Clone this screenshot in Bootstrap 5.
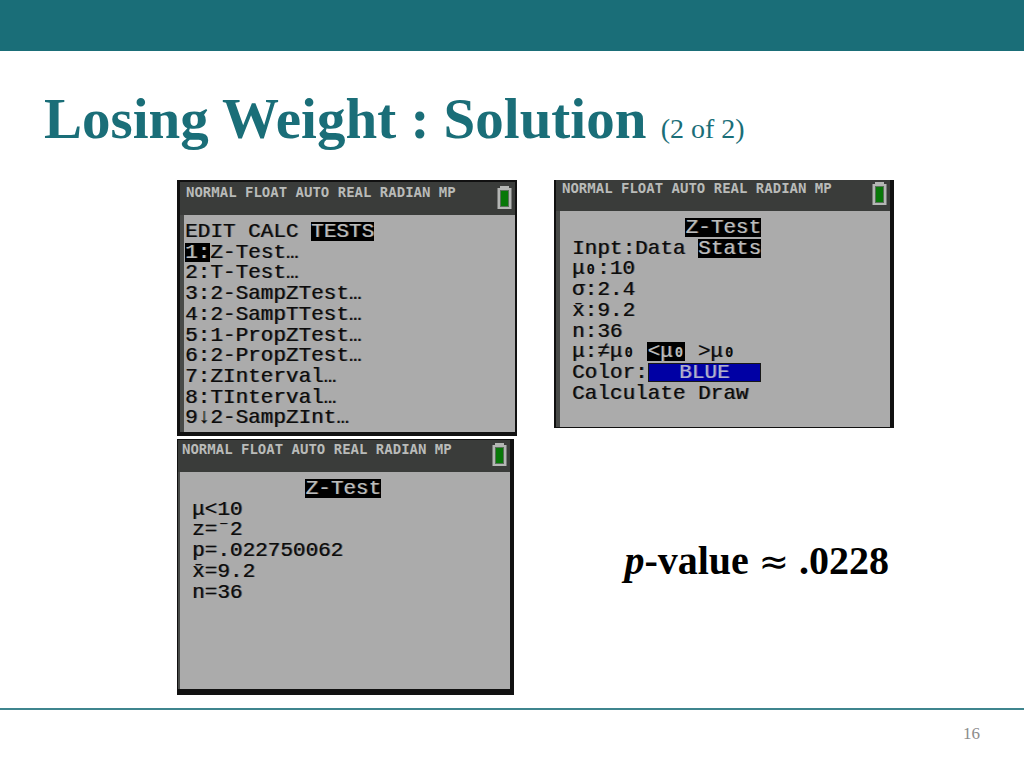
<!DOCTYPE html>
<html lang="en">
<head>
<meta charset="utf-8">
<meta name="viewport" content="width=device-width, initial-scale=1">
<title>Losing Weight : Solution</title>
<link href="https://cdn.jsdelivr.net/npm/bootstrap@5.3.0/dist/css/bootstrap.min.css" rel="stylesheet">
<style>
  :root { --teal: #1a6e78; --lcd: #ababab; --ink: #0c0c0c; --bar: #3a3c3a; }
  body { font-family: "Liberation Serif", "Times New Roman", serif; color: #000; background: #fff; }
  .top-band { height: 51px; background: var(--teal); }
  .slide-title { color: var(--teal); font-size: 57px; line-height: 68px; font-weight: 700; padding: 34px 44px 27px; }
  .slide-title .part { font-size: 28px; font-weight: 400; line-height: 28px; }
  .boards { display: grid; grid-template-columns: 1fr 1fr; gap: 3px 37px; padding: 0 130px 0 177px; }

  /* calculator screens */
  .calc { background: var(--lcd); border: 0 solid #111; font-family: "Liberation Mono", "DejaVu Sans Mono", monospace; color: var(--ink); }
  .calc-menu { aspect-ratio: 340 / 256; border-width: 2px 2px 4px 3px; }
  .calc-setup { aspect-ratio: 340 / 248; border-width: 0 4px 1px 2px; }
  .calc-result { aspect-ratio: 337 / 256; border-width: 1px 4px 6px 1px; margin-right: 3px; }
  .status { background: var(--bar); color: #b9bbb9; font-family: "DejaVu Sans Mono", monospace; font-size: 14px; line-height: 16px; font-weight: 700; white-space: pre; }
  .calc-menu .status { height: 33px; padding: 2px 3px 0 6px; }
  .calc-setup .status { height: 31px; padding: 0 3px 0 6px; }
  .calc-result .status { height: 32px; padding: 1px 3px 0 4px; }
  .battery { width: 15px; height: 23px; margin-top: 2px; }
  .lcd { display: grid; grid-template-rows: repeat(10, minmax(0, 1fr)); border-left: 4px solid #484a48; padding: 7px 0 3px 1px; font-size: 21px; line-height: 19px; white-space: pre; text-shadow: 1px 0 rgb(12 12 12 / 50%); }
  .calc-setup .lcd { padding: 7px 0 2px 12px; }
  .calc-result .lcd { padding: 7px 0 3px 12px; border-left-width: 2px; }
  .inv { display: inline-block; background: #000; color: #bcbcbc; text-shadow: 1px 0 rgb(188 188 188 / 50%); }
  .blue { display: inline-block; background: #0000a4; color: #b0b0cc; width: 9ch; text-align: center; outline: 1px solid #181818; outline-offset: -1px; text-shadow: 1px 0 rgb(176 176 204 / 50%); }
  .nought { font-family: "DejaVu Sans Mono", monospace; font-size: 14px; line-height: 14px; font-weight: 700; padding: 0 2px; text-shadow: none; }

  .answer { font-size: 40px; line-height: 48px; font-weight: 700; padding: 0 5px 12px 0; }
  .approx { font-family: "DejaVu Sans", sans-serif; font-size: 36px; line-height: 36px; font-weight: 400; }
  .foot { border-top: 2px solid #3f858e; color: #8c8c8c; font-size: 17px; line-height: 20px; padding: 14px 44px 0; height: 60px; }
</style>
</head>
<body>
<svg class="d-none" aria-hidden="true">
  <symbol id="battery" viewBox="0 0 15 23">
    <path d="M3 0h9v2h2.500v21H.5V2H3z" fill="#b4b6b4"/>
    <path d="M3 4h9v17H3z" fill="#59705a"/>
    <path d="M4 5h7v15H4z" fill="#087808"/>
  </symbol>
</svg>
<div class="d-flex flex-column min-vh-100">
  <header class="top-band"></header>
  <main class="flex-grow-1">
    <h1 class="slide-title m-0">Losing Weight : Solution <span class="part">(2 of 2)</span></h1>
    <div class="boards align-items-start">
      <section class="calc calc-menu d-flex flex-column">
        <div class="status d-flex justify-content-between"><span>NORMAL FLOAT AUTO REAL RADIAN MP</span><svg class="battery"><use href="#battery"/></svg></div>
        <div class="lcd flex-grow-1">
          <div>EDIT CALC <span class="inv">TESTS</span></div>
          <div><span class="inv">1:</span>Z-Test…</div>
          <div>2:T-Test…</div>
          <div>3:2-SampZTest…</div>
          <div>4:2-SampTTest…</div>
          <div>5:1-PropZTest…</div>
          <div>6:2-PropZTest…</div>
          <div>7:ZInterval…</div>
          <div>8:TInterval…</div>
          <div>9↓2-SampZInt…</div>
        </div>
      </section>
      <section class="calc calc-setup d-flex flex-column">
        <div class="status d-flex justify-content-between"><span>NORMAL FLOAT AUTO REAL RADIAN MP</span><svg class="battery"><use href="#battery"/></svg></div>
        <div class="lcd flex-grow-1">
          <div>         <span class="inv">Z-Test</span></div>
          <div>Inpt:Data <span class="inv">Stats</span></div>
          <div>μ<span class="nought">0</span>:10</div>
          <div>σ:2.4</div>
          <div>x̄:9.2</div>
          <div>n:36</div>
          <div>μ:≠μ<span class="nought">0</span> <span class="inv">&lt;μ<span class="nought">0</span></span> &gt;μ<span class="nought">0</span></div>
          <div>Color:<span class="blue">BLUE</span></div>
          <div>Calculate Draw</div>
        </div>
      </section>
      <section class="calc calc-result d-flex flex-column">
        <div class="status d-flex justify-content-between"><span>NORMAL FLOAT AUTO REAL RADIAN MP</span><svg class="battery"><use href="#battery"/></svg></div>
        <div class="lcd flex-grow-1">
          <div>         <span class="inv">Z-Test</span></div>
          <div>μ&lt;10</div>
          <div>z=⁻2</div>
          <div>p=.022750062</div>
          <div>x̄=9.2</div>
          <div>n=36</div>
        </div>
      </section>
      <p class="answer align-self-center text-end m-0"><em>p</em>-value <span class="approx">≈</span> .0228</p>
    </div>
  </main>
  <footer class="foot text-end">16</footer>
</div>
<script src="https://cdn.jsdelivr.net/npm/bootstrap@5.3.0/dist/js/bootstrap.bundle.min.js"></script>
</body>
</html>
